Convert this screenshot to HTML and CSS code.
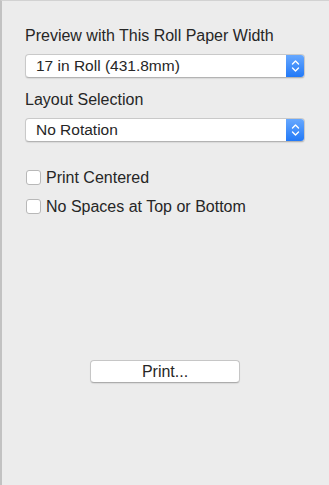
FILE: index.html
```html
<!DOCTYPE html>
<html>
<head>
    <title>Print Settings</title>
    <link rel="stylesheet" href="styles.css">
</head>
<body>
    <!-- Side panel with roll paper options -->
    <div class="panel">
        <div class="field-label">Preview with This Roll Paper Width</div>
        <div class="popup">
            <span class="popup-text">17 in Roll (431.8mm)</span>
            <span class="popup-arrows">
                <svg width="19" height="24" viewBox="0 0 19 24">
                    <path d="M6.5 10 L9.5 7 L12.5 10" fill="none" stroke="#fff" stroke-width="1.4" stroke-linecap="round" stroke-linejoin="round"/>
                    <path d="M6.5 14 L9.5 17 L12.5 14" fill="none" stroke="#fff" stroke-width="1.4" stroke-linecap="round" stroke-linejoin="round"/>
                </svg>
            </span>
        </div>

        <div class="field-label">Layout Selection</div>
        <div class="popup">
            <span class="popup-text">No Rotation</span>
            <span class="popup-arrows">
                <svg width="19" height="24" viewBox="0 0 19 24">
                    <path d="M6.5 10 L9.5 7 L12.5 10" fill="none" stroke="#fff" stroke-width="1.4" stroke-linecap="round" stroke-linejoin="round"/>
                    <path d="M6.5 14 L9.5 17 L12.5 14" fill="none" stroke="#fff" stroke-width="1.4" stroke-linecap="round" stroke-linejoin="round"/>
                </svg>
            </span>
        </div>

        <div class="checks">
            <label class="check"><span class="box"></span>Print Centered</label>
            <label class="check"><span class="box"></span>No Spaces at Top or Bottom</label>
        </div>

        <div class="actions">
            <button class="print-button" type="button">Print...</button>
        </div>
    </div>
</body>
</html>
```

FILE: styles.css
```css
html {
    height: 100%;
    overflow: hidden;
}

body {
    margin: 0;
    padding: 0;
    height: 100%;
    box-sizing: border-box;
    background: #ececec;
    border-left: 2px solid #c2c2c2;
    border-top: 1px solid #d2d2d2;
    font-family: "Liberation Sans", Arial, sans-serif;
    color: #262626;
}

/* Panel layout */
.panel {
    padding: 26px 24px 0 23px;
}

.field-label {
    font-size: 16px;
    line-height: 18px;
    margin-bottom: 9px;
}

/* Popup button (select) */
.popup {
    display: flex;
    align-items: center;
    height: 24px;
    box-sizing: border-box;
    background: #fff;
    border: 1px solid #c9c9c9;
    border-bottom-color: #b3b3b3;
    border-radius: 4px;
    box-shadow: 0 1px 1px rgba(0, 0, 0, 0.08);
    margin-bottom: 13px;
    overflow: hidden;
}

.popup-text {
    flex: 1;
    padding-left: 10px;
    font-size: 15.5px;
    line-height: 22px;
}

.popup-arrows {
    display: flex;
    width: 19px;
    height: 24px;
    margin: -1px -1px -1px 0;
    background: linear-gradient(#6aaaff, #1f77f7);
    border-radius: 0 4px 4px 0;
}

/* Checkboxes */
.checks {
    margin-top: 28px;
    display: flex;
    flex-direction: column;
    gap: 14px;
}

.check {
    display: flex;
    align-items: center;
    font-size: 16px;
    line-height: 15px;
}

.box {
    width: 15px;
    height: 15px;
    box-sizing: border-box;
    background: #fff;
    border: 1px solid #b8b8b8;
    border-radius: 3px;
    margin-left: 1px;
    margin-right: 5px;
}

/* Print button */
.actions {
    display: flex;
    justify-content: center;
    margin-top: 146px;
}

.print-button {
    width: 150px;
    height: 23px;
    background: #fff;
    border: 1px solid #c6c6c6;
    border-bottom-color: #acacac;
    border-radius: 4px;
    box-shadow: 0 1px 1px rgba(0, 0, 0, 0.08);
    font-family: "Liberation Sans", Arial, sans-serif;
    font-size: 16px;
    color: #262626;
    padding: 0;
}
```
